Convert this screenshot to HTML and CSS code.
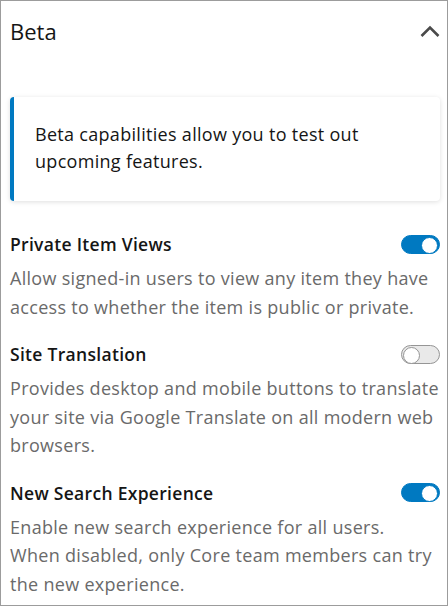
FILE: index.html
```html
<!DOCTYPE html>
<html lang="en">
<head>
  <meta charset="UTF-8">
  <title>Beta settings</title>
  <link rel="stylesheet" href="styles.css">
</head>
<body>

  <div class="panel">
    <div class="panel-header">
      <h2>Beta</h2>
      <svg class="chevron" width="20" height="14" viewBox="0 0 20 14">
        <path d="M1.5 12 L10 3.5 L18.5 12" fill="none" stroke="#4a4a4a" stroke-width="2.6"/>
      </svg>
    </div>

    <div class="panel-body">
      <div class="notice">
        <p>Beta capabilities allow you to test out upcoming features.</p>
      </div>

      <div class="setting">
        <div class="setting-head">
          <span class="setting-title">Private Item Views</span>
          <span class="switch on"></span>
        </div>
        <p class="setting-desc">Allow signed-in users to view any item they have access to whether the item is public or private.</p>
      </div>

      <div class="setting">
        <div class="setting-head">
          <span class="setting-title">Site Translation</span>
          <span class="switch"></span>
        </div>
        <p class="setting-desc">Provides desktop and mobile buttons to translate your site via Google Translate on all modern web browsers.</p>
      </div>

      <div class="setting">
        <div class="setting-head">
          <span class="setting-title">New Search Experience</span>
          <span class="switch on"></span>
        </div>
        <p class="setting-desc">Enable new search experience for all users.<br>When disabled, only Core team members can try the new experience.</p>
      </div>
    </div>
  </div>

</body>
</html>
```

FILE: styles.css
```css
* {
  box-sizing: border-box;
}

body {
  margin: 0;
  font-family: "Open Sans", "Noto Sans", sans-serif;
  color: #151515;
  background: #fff;
}

.panel {
  width: 448px;
  height: 606px;
  border: 1px solid #9c9c9c;
  overflow: hidden;
}

.panel-header {
  display: flex;
  align-items: center;
  justify-content: space-between;
  height: 60px;
  padding: 0 7px 0 9px;
}

.panel-header h2 {
  margin: 0;
  font-size: 22px;
  font-weight: 400;
}

.panel-body {
  padding: 36px 7px 0 9px;
}

.notice {
  background: #fff;
  border-left: 4px solid #0079c1;
  border-radius: 4px;
  box-shadow: 0 1px 5px rgba(0, 0, 0, 0.13);
  padding: 24px 20px 26px 21px;
}

.notice p {
  margin: 0;
  font-size: 18px;
  line-height: 27px;
  letter-spacing: 0.3px;
}

.setting {
  margin-top: 30px;
}

.setting + .setting {
  margin-top: 20px;
}

.setting-head {
  display: flex;
  align-items: center;
  justify-content: space-between;
  height: 26px;
}

.setting-title {
  font-size: 17.5px;
  font-weight: 600;
  letter-spacing: 0.3px;
}

.setting-desc {
  margin: 7px -1px 0 0;
  font-size: 18px;
  line-height: 28.5px;
  letter-spacing: 0.3px;
  color: #6a6a6a;
}

.switch {
  position: relative;
  width: 39px;
  height: 19px;
  border-radius: 10px;
  border: 1px solid #959595;
  background: #e9e9e9;
}

.switch::after {
  content: "";
  position: absolute;
  top: 1px;
  left: 1px;
  width: 15px;
  height: 15px;
  border-radius: 50%;
  background: #fff;
  border: 1px solid #959595;
}

.switch.on {
  background: #0079c1;
  border-color: #0079c1;
}

.switch.on::after {
  left: auto;
  right: 1px;
  border-color: #0079c1;
}
```
